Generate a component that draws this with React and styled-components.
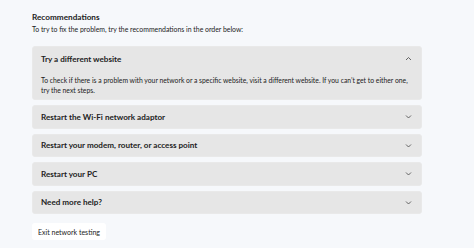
import React from "react";
import styled, { createGlobalStyle } from "styled-components";

const GlobalStyle = createGlobalStyle`
  html, body {
    margin: 0;
    padding: 0;
    background: #f6f8fb;
    font-family: "Segoe UI", Lato, "Noto Sans", sans-serif;
    color: #1b1b1b;
  }
`;

const Page = styled.div`
  width: 474px;
  height: 248px;
  box-sizing: border-box;
  padding: 11px 52px 0 32px;
  display: flex;
  flex-direction: column;
`;

const Title = styled.div`
  font-size: 8.2px;
  font-weight: 700;
  line-height: 12px;
  color: #222;
`;

const Subtitle = styled.div`
  font-size: 6.9px;
  line-height: 12px;
  margin-bottom: 11px;
`;

const List = styled.div`
  display: flex;
  flex-direction: column;
  gap: 5px;
`;

const Panel = styled.div`
  background: #e6e6e6;
  border-radius: 3px;
  border: 1px solid #e9e9e9;
`;

const Header = styled.div`
  height: ${(p) => (p.open ? "23px" : "21.5px")};
  display: flex;
  align-items: center;
  justify-content: space-between;
  padding: 0 9px 0 8px;
  font-size: 8.1px;
  font-weight: 700;
  color: #222;
`;

const Body = styled.div`
  padding: 5px 8px 4px 8px;
  font-size: 6.8px;
  line-height: 10px;
`;

const Chevron = ({ up }) => (
  <svg width="7" height="5" viewBox="0 0 7 5">
    <path
      d={up ? "M1 4 L3.5 1.5 L6 4" : "M1 1.5 L3.5 4 L6 1.5"}
      fill="none"
      stroke="#444"
      strokeWidth="0.8"
    />
  </svg>
);

const ExitButton = styled.button`
  align-self: flex-start;
  margin-top: 9px;
  height: 17px;
  padding: 0 6px;
  background: #ffffff;
  border: none;
  border-radius: 3px;
  font-family: inherit;
  font-size: 7px;
  color: #1b1b1b;
`;

const items = [
  "Restart the Wi-Fi network adaptor",
  "Restart your modem, router, or access point",
  "Restart your PC",
  "Need more help?",
];

export default function App() {
  return (
    <>
      <GlobalStyle />
      <Page>
        <Title>Recommendations</Title>
        <Subtitle>
          To try to fix the problem, try the recommendations in the order below:
        </Subtitle>
        <List>
          <Panel>
            <Header open>
              <span>Try a different website</span>
              <Chevron up />
            </Header>
            <Body>
              To check if there is a problem with your network or a specific
              website, visit a different website. If you can’t get to either
              one, try the next steps.
            </Body>
          </Panel>
          {items.map((t) => (
            <Panel key={t}>
              <Header>
                <span>{t}</span>
                <Chevron />
              </Header>
            </Panel>
          ))}
        </List>
        <ExitButton>Exit network testing</ExitButton>
      </Page>
    </>
  );
}
